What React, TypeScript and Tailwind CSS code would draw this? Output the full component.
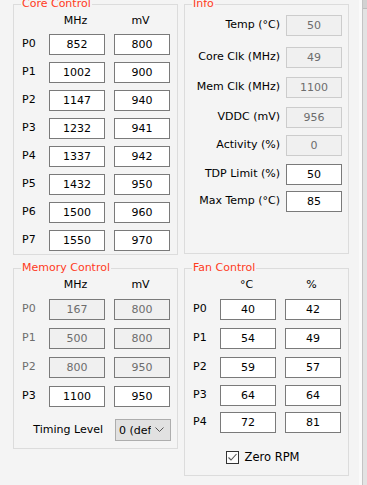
import React from "react";

type Kind = "edit" | "dis" | "ro";

const boxCls: Record<Kind, string> = {
  edit: "border-[#7a7a7a] bg-white text-black",
  dis: "border-[#7a7a7a] bg-[#f0f0f0] text-[#6d6d6d]",
  ro: "border-[#cccccc] bg-[#f0f0f0] text-[#6d6d6d]",
};

function Box({ v, kind = "edit" }: { v: string; kind?: Kind }) {
  return (
    <div className={`w-[56px] h-[21px] shrink-0 border flex items-center justify-center leading-none ${boxCls[kind]}`}>
      {v}
    </div>
  );
}

function Group({ title, h, children }: { title: string; h: string; children: React.ReactNode }) {
  return (
    <div className={`relative w-[165px] border border-[#dcdcdc] ${h}`}>
      <span className="absolute left-[7px] -top-[8px] px-[1px] leading-[13px] bg-[#f4f4f4] text-[#ff3b1d]">{title}</span>
      {children}
    </div>
  );
}

function Header({ a, b }: { a: string; b: string }) {
  return (
    <div className="flex pl-[35px] pt-[9px] leading-[13px] text-black">
      <div className="w-[56px] text-center pr-[3px]">{a}</div>
      <div className="w-[56px] ml-[9px] text-center pr-[3px]">{b}</div>
    </div>
  );
}

function Row({ p, a, b, kind = "edit", mt }: { p: string; a: string; b: string; kind?: Kind; mt: string }) {
  return (
    <div className={`flex items-center pl-[8px] ${mt}`}>
      <div className={`w-[27px] ${kind === "dis" ? "text-[#6d6d6d]" : "text-black"}`}>{p}</div>
      <Box v={a} kind={kind} />
      <div className="ml-[9px]">
        <Box v={b} kind={kind} />
      </div>
    </div>
  );
}

const core = [
  ["P0", "852", "800"],
  ["P1", "1002", "900"],
  ["P2", "1147", "940"],
  ["P3", "1232", "941"],
  ["P4", "1337", "942"],
  ["P5", "1432", "950"],
  ["P6", "1500", "960"],
  ["P7", "1550", "970"],
];

const info: [string, string, Kind, string][] = [
  ["Temp (°C)", "50", "ro", "mt-[10px]"],
  ["Core Clk (MHz)", "49", "ro", "mt-[11px]"],
  ["Mem Clk (MHz)", "1100", "ro", "mt-[9px]"],
  ["VDDC (mV)", "956", "ro", "mt-[9px]"],
  ["Activity (%)", "0", "ro", "mt-[7px]"],
  ["TDP Limit (%)", "50", "edit", "mt-[8px]"],
  ["Max Temp (°C)", "85", "edit", "mt-[6px]"],
];

const mem: [string, string, string, Kind][] = [
  ["P0", "167", "800", "dis"],
  ["P1", "500", "800", "dis"],
  ["P2", "800", "950", "dis"],
  ["P3", "1100", "950", "edit"],
];

const fan: [string, string, string, string][] = [
  ["P0", "40", "42", "mt-[8px]"],
  ["P1", "54", "49", "mt-[8px]"],
  ["P2", "59", "57", "mt-[8px]"],
  ["P3", "64", "64", "mt-[7px]"],
  ["P4", "72", "81", "mt-[6px]"],
];

export default function App() {
  return (
    <div className="w-[367px] h-[485px] overflow-hidden flex bg-[#f4f4f4] font-['DejaVu_Sans',sans-serif] text-[11px]">
      <div className="flex gap-[6px] pl-[13px] pt-[4px] w-[359px]">
        {/* left column */}
        <div className="flex flex-col">
          <Group title="Core Control" h="h-[251px]">
            <Header a="MHz" b="mV" />
            {core.map(([p, a, b]) => (
              <Row key={p} p={p} a={a} b={b} mt="mt-[7px]" />
            ))}
          </Group>
          <div className="mt-[13px]">
            <Group title="Memory Control" h="h-[181px]">
              <Header a="MHz" b="mV" />
              {mem.map(([p, a, b, k]) => (
                <Row key={p} p={p} a={a} b={b} kind={k} mt="mt-[8px]" />
              ))}
              <div className="flex justify-end items-center gap-[12px] pr-[6px] mt-[12px]">
                <span className="text-black">Timing Level</span>
                <div className="w-[56px] h-[22px] border border-[#adadad] bg-[#e1e1e1] flex items-center pl-[3px] pr-[6px]">
                  <span className="w-[32px] overflow-hidden whitespace-nowrap text-black leading-none">0 (default)</span>
                  <svg className="ml-auto" width="9" height="6" viewBox="0 0 9 6">
                    <polyline points="0.5,0.5 4.5,4.5 8.5,0.5" fill="none" stroke="#555" strokeWidth="1" />
                  </svg>
                </div>
              </div>
            </Group>
          </div>
        </div>

        {/* right column */}
        <div className="flex flex-col">
          <Group title="Info" h="h-[250px]">
            {info.map(([l, v, k, mt]) => (
              <div key={l} className={`flex justify-end items-center gap-[6px] pr-[6px] ${mt}`}>
                <span className="text-black">{l}</span>
                <Box v={v} kind={k} />
              </div>
            ))}
          </Group>
          <div className="mt-[14px]">
            <Group title="Fan Control" h="h-[208px]">
              <Header a="°C" b="%" />
              {fan.map(([p, a, b, mt]) => (
                <Row key={p} p={p} a={a} b={b} mt={mt} />
              ))}
              <div className="flex items-center justify-center gap-[6px] mt-[16px] pr-[8px]">
                <div className="w-[13px] h-[13px] border border-[#333] bg-[#fdfdfd] flex items-center justify-center">
                  <svg width="11" height="11" viewBox="0 0 11 11">
                    <polyline points="1.5,5.5 4,8 9.5,2" fill="none" stroke="#555" strokeWidth="1.1" />
                  </svg>
                </div>
                <span className="text-black text-[11.5px]">Zero RPM</span>
              </div>
            </Group>
          </div>
        </div>
      </div>

      {/* window edge */}
      <div className="w-[3px] h-full bg-[#fafafa]" />
      <div className="w-[5px] h-full flex flex-col border-l border-[#c4c4c4] bg-[#e3e3e3]">
        <div className="h-[9px] bg-[#d2d2d2] border-b border-[#bdbdbd]" />
      </div>
    </div>
  );
}
